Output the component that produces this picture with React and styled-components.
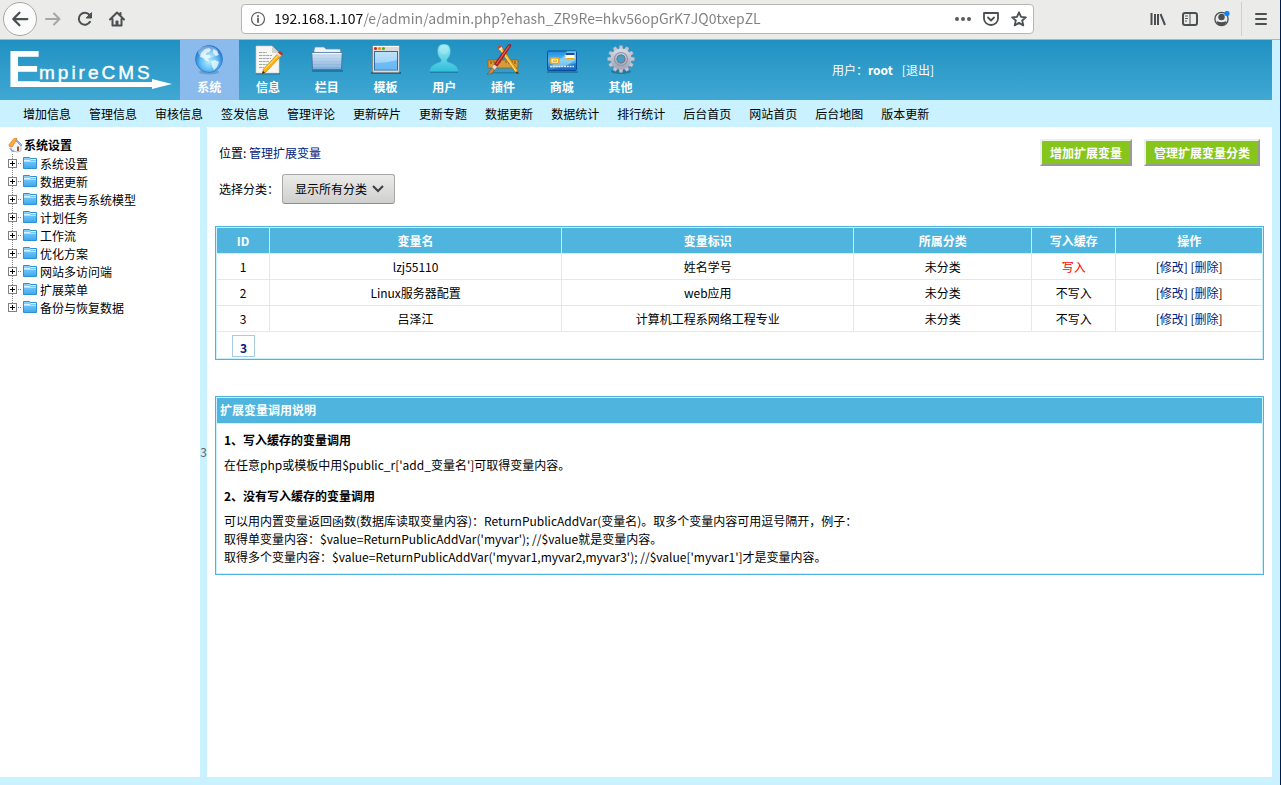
import { useState } from 'react';
import styled, { createGlobalStyle } from 'styled-components';

const GlobalStyle = createGlobalStyle`
  * {
    box-sizing: border-box;
  }
  body {
    margin: 0;
    background: #c9f1ff;
    color: #000;
    font-family: 'Noto Sans CJK SC', 'Noto Sans', sans-serif;
    font-size: 12px;
    line-height: 18px;
  }
  a {
    color: inherit;
    text-decoration: none;
  }
  button, input, select {
    font: inherit;
  }
  svg {
    display: block;
    flex: none;
  }
`;

const Page = styled.div`
  display: flex;
  flex-direction: column;
  min-height: 100vh;
  border-right: 1px solid #001a49;
`;

/* browser bar */

const BrowserBar = styled.header`
  display: flex;
  align-items: center;
  height: 40px;
  padding-bottom: 1px;
  background: #ebebe9;
  border-bottom: 1px solid #b4b3b0;
`;

const BarGroup = styled.div`
  display: flex;
  align-items: center;
  justify-content: ${(p) => (p.$end ? 'flex-end' : 'flex-start')};
  gap: 16px;
  flex: 0 0 ${(p) => (p.$end ? 246 : 241)}px;
  padding: ${(p) => (p.$end ? '0 11px 0 0' : '0 0 0 3px')};
`;

const BarButton = styled.button`
  display: flex;
  align-items: center;
  justify-content: center;
  width: 16px;
  height: 16px;
  padding: 0;
  border: 0;
  background: none;
  color: ${(p) => (p.$dim ? '#a6a6a5' : '#4a4f51')};
`;

const BackButton = styled(BarButton)`
  width: 34px;
  height: 34px;
  margin-right: -8px;
  border: 1px solid #a9a8a6;
  border-radius: 50%;
  background: #fbfbfb;
`;

const BarSeparator = styled.span`
  width: 1px;
  height: 34px;
  margin: 0 -5px;
  background: #d0d0ce;
`;

const UrlBar = styled.div`
  display: flex;
  align-items: center;
  gap: 12px;
  flex: 1;
  height: 30px;
  padding: 0 6px 0 8px;
  border: 1px solid #b6b6b3;
  border-radius: 4px;
  background: #fff;
  color: #5b5b5b;
`;

const UrlInput = styled.input`
  flex: 1;
  min-width: 0;
  height: 28px;
  margin-left: -4px;
  padding: 0 0 2px;
  border: 0;
  outline: 0;
  font-size: 14px;
  color: #737373;
  background: linear-gradient(to right, #0c0c0d 90px, #808080 90px);
  background-clip: text;
  -webkit-background-clip: text;
  -webkit-text-fill-color: transparent;
`;

/* top of the admin */

const TopBar = styled.div`
  display: flex;
  height: 60px;
  margin-right: 8px;
  background: linear-gradient(#2091c2, #40a8d3);
  color: #fff;
`;

const Logo = styled.a`
  flex: 0 0 180px;
`;

const MainNav = styled.nav`
  display: flex;
  flex: 0 0 470px;
`;

const MainNavItem = styled.a`
  display: flex;
  flex: 1;
  flex-direction: column;
  align-items: center;
  gap: 2px;
  padding-top: 4px;
  font-weight: bold;
  background: ${(p) => (p.$active ? '#8bbbec' : 'transparent')};
`;

const UserInfo = styled.div`
  display: flex;
  align-items: center;
  gap: 9px;
  padding-left: 182px;
`;

const SubNav = styled.nav`
  display: flex;
  flex-wrap: wrap;
  gap: 0 18px;
  padding: 5px 23px 4px;
`;

/* columns */

const Columns = styled.div`
  display: flex;
  flex: 1;
  margin: 0 8px 8px 0;
`;

const Sidebar = styled.aside`
  flex: 0 0 200px;
  padding: 9px 8px;
  background: #fff;
`;

const TreeTitle = styled.h2`
  display: flex;
  align-items: center;
  gap: 1px;
  margin: 0;
  font-size: 12px;
  line-height: 18px;
`;

const TreeList = styled.ul`
  margin: 0;
  padding: 0;
  list-style: none;
`;

const TreeRow = styled.li`
  display: flex;
  height: 18px;
  line-height: 20px;
`;

const TreeToggle = styled.button`
  padding: 0;
  border: 0;
  background: none;
`;

const TreeLink = styled.a`
  display: flex;
  gap: 2px;
`;

const Splitter = styled.button`
  flex: 0 0 7px;
  padding: 0;
  border: 0;
  background: #c9f1ff;
  color: #666;
  cursor: pointer;
`;

const Content = styled.main`
  flex: 1;
  min-width: 0;
  padding: 12px 8px;
  background: #fff;
`;

const Heading = styled.div`
  display: flex;
  align-items: center;
  justify-content: space-between;
  padding: 0 4px;
`;

const TextLink = styled.a`
  color: #002280;
`;

const Buttons = styled.div`
  display: flex;
  gap: 12px;
`;

const GreenButton = styled.button`
  height: 27px;
  padding: 0 8px;
  border: 2px solid;
  border-color: #efefef #999 #999 #efefef;
  background: #86c61c;
  color: #fff;
  font-weight: bold;
`;

const Filter = styled.div`
  display: flex;
  align-items: center;
  gap: 3px;
  padding: 8px 4px 22px;
`;

const SelectBox = styled.div`
  position: relative;

  svg {
    position: absolute;
    top: 10px;
    right: 11px;
    pointer-events: none;
  }
`;

const Select = styled.select`
  appearance: none;
  width: 113px;
  height: 30px;
  padding: 0 12px;
  border: 1px solid #a8a8a4;
  border-bottom-color: #8e8e8a;
  border-radius: 3px;
  background: linear-gradient(#ebebea, #cfcfcd);
  color: #000;
`;

const DataTable = styled.table`
  width: 100%;
  table-layout: fixed;
  border: 1px solid #4fb4de;
  border-spacing: 1px;
  background: #c9f1ff;
  text-align: center;
`;

const HeadCell = styled.th`
  width: ${(p) => p.$width};
  height: 25px;
  padding: 0;
  background: #4fb4de;
  color: #fff;
`;

const Cell = styled.td`
  height: 25px;
  padding: 0;
  background: #fff;
  color: ${(p) => (p.$cached ? '#f00' : '#000')};
`;

const PagerCell = styled.td`
  height: 26px;
  padding: 2px 15px 0;
  background: #fff;
  text-align: left;
`;

const PageCount = styled.a`
  display: block;
  width: 23px;
  height: 22px;
  padding-top: 3px;
  border: 1px solid #a5cbe6;
  color: #002280;
  font-weight: bold;
  text-align: center;
`;

const HelpBox = styled.section`
  margin-top: 36px;
  padding: 1px;
  border: 1px solid #4fb4de;
  box-shadow: inset 0 0 0 1px #c9f1ff;
`;

const HelpTitle = styled.h2`
  margin: 0;
  padding: 3px 3px 4px;
  border-bottom: 1px solid #c9f1ff;
  background: #4fb4de;
  color: #fff;
  font-size: 12px;
  line-height: 18px;
`;

const HelpBody = styled.div`
  padding: 7px;

  h3 {
    margin: 0 0 7px;
    font-size: 12px;
    line-height: 18px;
  }
  p {
    margin: 0 0 13px;
  }
  p:last-child {
    margin: 0;
  }
`;

const Line = ({ children, size = 16, width = 2 }) => (
  <svg width={size} height={size} viewBox="0 0 16 16" fill="none" stroke="currentColor" strokeWidth={width} strokeLinecap="round" strokeLinejoin="round" aria-hidden="true">
    {children}
  </svg>
);

const teeth = [0, 30, 60, 90, 120, 150, 180, 210, 240, 270, 300, 330];

const icons = {
  system: (
    <>
      <ellipse cx="16" cy="28" rx="10" ry="2.5" fill="#4b7fae" opacity=".5" />
      <circle cx="16" cy="15" r="13.5" fill="url(#globe)" stroke="#2f7ccb" strokeWidth=".8" />
      <path d="M8 9l4-4 4-1 2 2-2 2-3 1 0 2 4 0 1 2-3 2 1 2-3 0-3-3-3-1z" fill="#fff" opacity=".7" />
      <path d="M20 5l4 2 2 4-3 1-3-3zM18 17l4-1 4 2-2 5-3 3-2-4z" fill="#fff" opacity=".7" />
      <ellipse cx="15" cy="8" rx="10" ry="6" fill="#fff" opacity=".35" />
    </>
  ),
  info: (
    <>
      <path d="M4 29h24v1.500H4z" fill="#195f82" opacity=".6" />
      <path d="M4 2h16l7 7v20H4z" fill="#f6f6f4" stroke="#c9c9c4" strokeWidth=".6" />
      <path d="M20 2v7h7z" fill="#d2d2ce" />
      <path d="M7 8.500h8M7 11.500h13M7 14.500h12M7 17.500h10M7 20.500h8M7 23.500h5" stroke="#a5a5a5" strokeWidth="1" strokeDasharray="3 .6" />
      <path d="M10 30l1.500-5L25.500 10l3 2.500L14 28z" fill="#f7b414" stroke="#c4740b" strokeWidth=".6" />
      <path d="M12.500 25.500L26 11.500" stroke="#ffe37a" strokeWidth="1" />
      <path d="M25 10.500l1.500-2 3 2.500-1.500 2z" fill="#d9d9d9" />
      <path d="M26.500 8.500c1-1.500 4-.5 4 1.500l-1 1z" fill="#c4332c" stroke="#c4332c" />
      <path d="M10 30l1-3 2 1.800z" fill="#222" />
    </>
  ),
  column: (
    <>
      <path d="M1 26h31v2H1z" fill="#165a80" opacity=".55" />
      <path d="M3 6l1-3h9l2 2h14l1 3v5H3z" fill="#eef2f7" stroke="#6f8ba8" strokeWidth=".7" />
      <path d="M.8 8.500h30.400L30.500 25.500h-29z" fill="url(#folder)" stroke="#456f9b" strokeWidth=".8" />
      <path d="M1.500 9.500h29" stroke="#fff" opacity=".8" />
      <path d="M2 13h28M2 16h28M2 19h28M2 22h28" stroke="#fff" strokeWidth="1" opacity=".22" />
    </>
  ),
  template: (
    <>
      <path d="M1 28h30v2H1z" fill="#1c516b" opacity=".7" />
      <rect x="2.500" y="1.500" width="27" height="27" rx="1.500" fill="#dcdcdc" stroke="#848c91" />
      <path d="M3 2.500h26" stroke="#fff" />
      <circle cx="5.500" cy="4.500" r="1.500" fill="#d32119" />
      <circle cx="9.500" cy="4.500" r="1.500" fill="#ef8a11" />
      <circle cx="13.500" cy="4.500" r="1.500" fill="#50a51c" />
      <rect x="4.500" y="7.500" width="23" height="18.500" fill="url(#window)" stroke="#2d6fa5" />
      <path d="M5 19c8 0 16-1 22-3v9.500H5z" fill="#4fabf2" opacity=".6" />
    </>
  ),
  user: (
    <>
      <path d="M2 27h28v2H2z" fill="#155f82" opacity=".5" />
      <path d="M16 0c5 0 6.500 3.500 6.500 7.500 0 4-2 6.500-3.500 8 0 2 0 2 1 2.500 4 1.500 10 3 10.500 9.500H1.500C2 21 8 19.500 12 18c1-.5 1-.5 1-2.500-1.500-1.500-3.500-4-3.500-8C9.500 3.500 11 0 16 0z" fill="url(#person)" stroke="#35a3c3" strokeWidth=".6" />
      <ellipse cx="16" cy="6" rx="4.500" ry="4.500" fill="#fff" opacity=".2" />
    </>
  ),
  plugin: (
    <>
      <path d="M1 16h30v8H1z" fill="#d69b3d" stroke="#98601a" strokeWidth=".8" />
      <path d="M4 17v3M7 17v2M10 17v3M13 17v2M19 17v2M22 17v3M25 17v2M28 17v3" stroke="#7a4a13" />
      <path d="M4 28h28v1.500H4z" fill="#145273" opacity=".4" />
      <path d="M11 4l3-2 16.500 24 1 4-3.500-2.500z" fill="#f8b51c" stroke="#a8650e" strokeWidth=".6" />
      <path d="M13 4.500l16 23" stroke="#ffe88b" strokeWidth="1" />
      <path d="M10.500 3l2.500-2 1.500 2-2.500 2z" fill="#d9403b" />
      <path d="M12 5l2.500-2 1 1.500-2.500 2z" fill="#eee" />
      <path d="M30 27l1.500 3-2.500-1z" fill="#222" />
      <path d="M21.500.8c1.500-1.500 3 0 2 1.700L10 22.500 7 20.500z" fill="#c02425" stroke="#771214" strokeWidth=".6" />
      <path d="M22 2L9.500 20" stroke="#ef7772" strokeWidth=".8" />
      <path d="M7 20.500l3 2-2.500 3.500-2.500-2z" fill="#dcdcdc" />
      <path d="M5 24l2.500 2-1 2c-2 2-4 2-6.500 2 2.500-1.500 2-3.500 5-6z" fill="#c28b50" stroke="#76512c" strokeWidth=".6" />
    </>
  ),
  shop: (
    <>
      <path d="M1 27h31v2H1z" fill="#12577e" opacity=".5" />
      <rect x="1.500" y="7" width="29" height="19.500" rx="1.500" fill="url(#card)" stroke="#0b4b9b" />
      <path d="M2 26l9-10 6-3 4-6h9v8c-8 8-18 9-28 11z" fill="#bfe8fb" opacity=".5" />
      <path d="M2 23c8 1 18 0 28-4v7H2z" fill="#1068c4" opacity=".6" />
      <path d="M19.500 9h9v6h-9z" fill="#fff" />
      <path d="M19.500 9h9v2h-9z" fill="#1d4ba0" />
      <path d="M19.500 14h9v1h-9z" fill="#f0a817" />
      <rect x="4.800" y="14" width="8" height="5.500" rx="1" fill="#fff0b8" stroke="#f0a31b" strokeWidth="1.400" />
      <path d="M7.500 16h3v1.500h-3z" fill="none" stroke="#eea018" strokeWidth=".8" />
      <path d="M4 22.500h24" stroke="#d8efff" strokeWidth="1.400" strokeDasharray="2 .8" />
    </>
  ),
  other: (
    <>
      <ellipse cx="16" cy="27.500" rx="10" ry="2.500" fill="#125578" opacity=".5" />
      {teeth.map((deg) => (
        <path key={deg} d="M14.500 1.500h3l.8 4.500h-4.600z" fill="#c4c6d1" stroke="#8f94a5" strokeWidth=".4" transform={`rotate(${deg} 16 15)`} />
      ))}
      <circle cx="16" cy="15" r="7.500" fill="none" stroke="url(#gear)" strokeWidth="6" />
      <circle cx="16" cy="15" r="6.500" fill="none" stroke="#8f94a8" strokeWidth="1.200" />
      <circle cx="16" cy="15" r="4" fill="#4a9fc2" stroke="#747a8d" />
    </>
  ),
};

const Gradients = () => (
  <svg width="0" height="0" aria-hidden="true" style={{ position: 'absolute' }}>
    <defs>
      <radialGradient id="globe" cx=".5" cy=".6" r=".6">
        <stop offset="0" stopColor="#b4efff" />
        <stop offset=".55" stopColor="#5cbcf4" />
        <stop offset="1" stopColor="#1863c2" />
      </radialGradient>
      <linearGradient id="folder" x2="0" y2="1">
        <stop offset="0" stopColor="#d3e1f0" />
        <stop offset="1" stopColor="#78aadb" />
      </linearGradient>
      <linearGradient id="window" x2="0" y2="1">
        <stop offset="0" stopColor="#c0e2fa" />
        <stop offset="1" stopColor="#8ccaf8" />
      </linearGradient>
      <linearGradient id="person" x2="0" y2="1">
        <stop offset="0" stopColor="#9ceaf3" />
        <stop offset="1" stopColor="#2fbfdc" />
      </linearGradient>
      <linearGradient id="card" x2="0" y2="1">
        <stop offset="0" stopColor="#1a8de0" />
        <stop offset=".5" stopColor="#56b9f0" />
        <stop offset="1" stopColor="#1467bd" />
      </linearGradient>
      <linearGradient id="gear" x2="0" y2="1">
        <stop offset="0" stopColor="#d2d4de" />
        <stop offset="1" stopColor="#a6aaba" />
      </linearGradient>
      <linearGradient id="tree" x2="0" y2="1">
        <stop offset="0" stopColor="#8bd5ff" />
        <stop offset="1" stopColor="#3da7ec" />
      </linearGradient>
    </defs>
  </svg>
);

const menu = [
  ['system', '系统'],
  ['info', '信息'],
  ['column', '栏目'],
  ['template', '模板'],
  ['user', '用户'],
  ['plugin', '插件'],
  ['shop', '商城'],
  ['other', '其他'],
];

const shortcuts = [
  '增加信息', '管理信息', '审核信息', '签发信息', '管理评论', '更新碎片', '更新专题',
  '数据更新', '数据统计', '排行统计', '后台首页', '网站首页', '后台地图', '版本更新',
];

const tree = [
  '系统设置', '数据更新', '数据表与系统模型', '计划任务', '工作流',
  '优化方案', '网站多访问端', '扩展菜单', '备份与恢复数据',
];

const columns = [
  ['ID', '5%'],
  ['变量名', '28%'],
  ['变量标识', '28%'],
  ['所属分类', '17%'],
  ['写入缓存', '8%'],
  ['操作', '14%'],
];

const vars = [
  { id: 1, name: 'lzj55110', label: '姓名学号', type: '未分类', cached: true },
  { id: 2, name: 'Linux服务器配置', label: 'web应用', type: '未分类', cached: false },
  { id: 3, name: '吕泽江', label: '计算机工程系网络工程专业', type: '未分类', cached: false },
];

function Browser() {
  return (
    <BrowserBar>
      <BarGroup>
        <BackButton aria-label="Back">
          <Line size={18}><path d="M14.500 8H2M7.500 2.500L2 8l5.500 5.500" /></Line>
        </BackButton>
        <BarButton $dim aria-label="Forward">
          <Line><path d="M1 8h13M9 2.500L14.500 8 9 13.500" /></Line>
        </BarButton>
        <BarButton aria-label="Reload">
          <Line><path d="M13 10.800A6 6 0 1 1 12.500 4" /><path d="M14.500 2v5h-5z" fill="currentColor" strokeWidth="1" /></Line>
        </BarButton>
        <BarButton aria-label="Home">
          <Line><path d="M1 8.500L8 1.500l7 7M3.500 8v6.500h9V8M11.500 2v2" /><path d="M7.500 10.500h1v3h-1z" /></Line>
        </BarButton>
      </BarGroup>
      <UrlBar>
        <Line width={1.2}>
          <circle cx="8" cy="8" r="6.500" />
          <path d="M8 7.500v3.500M8 4.800v.4" strokeWidth="1.800" />
        </Line>
        <UrlInput aria-label="Address" defaultValue="192.168.1.107/e/admin/admin.php?ehash_ZR9Re=hkv56opGrK7JQ0txepZL" />
        <BarButton aria-label="Page actions">
          <svg width="16" height="16" fill="#5b5b5b"><circle cx="2" cy="8" r="2" /><circle cx="8" cy="8" r="2" /><circle cx="14" cy="8" r="2" /></svg>
        </BarButton>
        <BarButton aria-label="Pocket">
          <Line width={1.8}><path d="M1 2h14v5.500a7 6.500 0 0 1-14 0zM5 6.500l3 3 3-3" /></Line>
        </BarButton>
        <BarButton aria-label="Bookmark">
          <Line width={1.8}><path d="M8 1.300l2 4.500 4.900.5-3.700 3.200 1.100 4.900L8 11.900l-4.300 2.500 1.100-4.900L1.100 6.300 6 5.800z" /></Line>
        </BarButton>
      </UrlBar>
      <BarGroup $end>
        <BarButton aria-label="Library">
          <Line><g strokeLinecap="butt"><path d="M1.500 2v12M5 3v11M8 3v11M10.500 3L15 14" strokeWidth="2" /></g></Line>
        </BarButton>
        <BarButton aria-label="Sidebar">
          <Line><rect x="1" y="2" width="14" height="12" rx="2" /><path d="M8 2v12M3.500 5h2M3.500 7.500h2M3.500 10h1" strokeWidth="1" /></Line>
        </BarButton>
        <BarButton aria-label="Account">
          <Line width={1.3}>
            <circle cx="7.500" cy="8" r="6.600" />
            <circle cx="7.500" cy="6" r="2.600" fill="currentColor" />
            <path d="M3.500 11c1.500 1.200 6.500 1.200 8 0-.5 2-2 2.500-4 2.500s-3.500-.5-4-2.500z" fill="currentColor" />
            <circle cx="13" cy="2.500" r="2.600" fill="#0a84ff" stroke="none" />
          </Line>
        </BarButton>
        <BarSeparator />
        <BarButton aria-label="Menu">
          <Line><path d="M3 3h10M3 8h10M3 13h10" /></Line>
        </BarButton>
      </BarGroup>
    </BrowserBar>
  );
}

function Top() {
  return (
    <>
      <TopBar>
        <Logo href="#" aria-label="EmpireCMS">
          <svg width="180" height="60" fill="#fff" fontFamily="'Liberation Sans', sans-serif">
            <text x="7" y="47" fontSize="52" fontWeight="bold">E</text>
            <text x="39" y="39" fontSize="19" letterSpacing="3" stroke="#fff" strokeWidth=".4">mpireCMS</text>
            <path d="M30 42h122v-3l20 5-20 5v-2H30z" />
          </svg>
        </Logo>
        <MainNav>
          {menu.map(([icon, label], i) => (
            <MainNavItem key={icon} href="#" $active={i === 0}>
              <svg width="32" height="32" viewBox="0 0 32 32" aria-hidden="true">{icons[icon]}</svg>
              {label}
            </MainNavItem>
          ))}
        </MainNav>
        <UserInfo>
          <span>用户：<b>root</b></span>
          <a href="#">[退出]</a>
        </UserInfo>
      </TopBar>
      <SubNav>
        {shortcuts.map((s) => <a key={s} href="#">{s}</a>)}
      </SubNav>
    </>
  );
}

function Tree() {
  return (
    <Sidebar>
      <TreeTitle>
        <svg width="15" height="16" viewBox="0 0 15 16" aria-hidden="true">
          <path d="M3 8l5-5 5 5v6l-4 1-6-2z" fill="#f2f5fb" stroke="#8fa5cc" strokeWidth=".7" />
          <path d="M8 2l6 6-1 1-5-5z" fill="#9bb8e6" stroke="#5f83c1" strokeWidth=".6" />
          <path d="M.8 8L6 1.500l3 0L4.500 9.500l-3 0z" fill="#f9a940" stroke="#e8851f" strokeWidth=".8" />
          <path d="M9 9.500l2 0v4.500l-2 0z" fill="#a8572b" />
          <path d="M1 11c2 0 4 2 6 4l-3 0z" fill="#8ba9dd" />
        </svg>
        系统设置
      </TreeTitle>
      <TreeList>
        {tree.map((name, i) => (
          <TreeRow key={name}>
            <TreeToggle aria-label={'展开' + name}>
              <svg width="14" height="18" aria-hidden="true">
                <path d={i === tree.length - 1 ? 'M4.500 0v9' : 'M4.500 0v18'} stroke="#808080" strokeDasharray="1 1" />
                <path d="M10 9.500h4" stroke="#808080" strokeDasharray="1 1" />
                <rect x=".5" y="5.500" width="8" height="8" fill="#fff" stroke="#808080" />
                <path d="M2 9.500h5M4.500 7v5" stroke="#000" />
              </svg>
            </TreeToggle>
            <TreeLink href="#">
              <svg width="16" height="18" aria-hidden="true">
                <path d="M1.500 3.500h6l1 1h6v10h-13z" fill="url(#tree)" stroke="#2b91d3" />
                <path d="M2 6.500h6l1-1h5" fill="none" stroke="#d9f3ff" />
                <path d="M2 7.500h12" stroke="#a9e1ff" />
              </svg>
              {name}
            </TreeLink>
          </TreeRow>
        ))}
      </TreeList>
    </Sidebar>
  );
}

function VarTable() {
  return (
    <DataTable>
      <thead>
        <tr>
          {columns.map(([title, width]) => <HeadCell key={title} $width={width}>{title}</HeadCell>)}
        </tr>
      </thead>
      <tbody>
        {vars.map((v) => (
          <tr key={v.id}>
            <Cell>{v.id}</Cell>
            <Cell>{v.name}</Cell>
            <Cell>{v.label}</Cell>
            <Cell>{v.type}</Cell>
            <Cell $cached={v.cached}>{v.cached ? '写入' : '不写入'}</Cell>
            <Cell>
              [<TextLink href="#">修改</TextLink>] [<TextLink href="#">删除</TextLink>]
            </Cell>
          </tr>
        ))}
        <tr>
          <PagerCell colSpan={6}><PageCount href="#">3</PageCount></PagerCell>
        </tr>
      </tbody>
    </DataTable>
  );
}

function App() {
  const [showTree, setShowTree] = useState(true);

  return (
    <Page>
      <GlobalStyle />
      <Gradients />
      <Browser />
      <Top />
      <Columns>
        {showTree && <Tree />}
        <Splitter onClick={() => setShowTree(!showTree)}>3</Splitter>
        <Content>
          <Heading>
            <span>位置: <TextLink href="#">管理扩展变量</TextLink></span>
            <Buttons>
              <GreenButton>增加扩展变量</GreenButton>
              <GreenButton>管理扩展变量分类</GreenButton>
            </Buttons>
          </Heading>
          <Filter>
            <label htmlFor="classid">选择分类：</label>
            <SelectBox>
              <Select id="classid">
                <option>显示所有分类</option>
              </Select>
              <svg width="12" height="10" fill="none" stroke="#3a3f41" strokeWidth="2" aria-hidden="true"><path d="M1 2l5 5 5-5" /></svg>
            </SelectBox>
          </Filter>
          <VarTable />
          <HelpBox>
            <HelpTitle>扩展变量调用说明</HelpTitle>
            <HelpBody>
              <h3>1、写入缓存的变量调用</h3>
              <p>在任意php或模板中用$public_r['add_变量名']可取得变量内容。</p>
              <h3>2、没有写入缓存的变量调用</h3>
              <p>
                可以用内置变量返回函数(数据库读取变量内容)：ReturnPublicAddVar(变量名)。取多个变量内容可用逗号隔开，例子：<br />
                取得单变量内容：$value=ReturnPublicAddVar('myvar'); //$value就是变量内容。<br />
                取得多个变量内容：$value=ReturnPublicAddVar('myvar1,myvar2,myvar3'); //$value['myvar1']才是变量内容。
              </p>
            </HelpBody>
          </HelpBox>
        </Content>
      </Columns>
    </Page>
  );
}

export default App;
